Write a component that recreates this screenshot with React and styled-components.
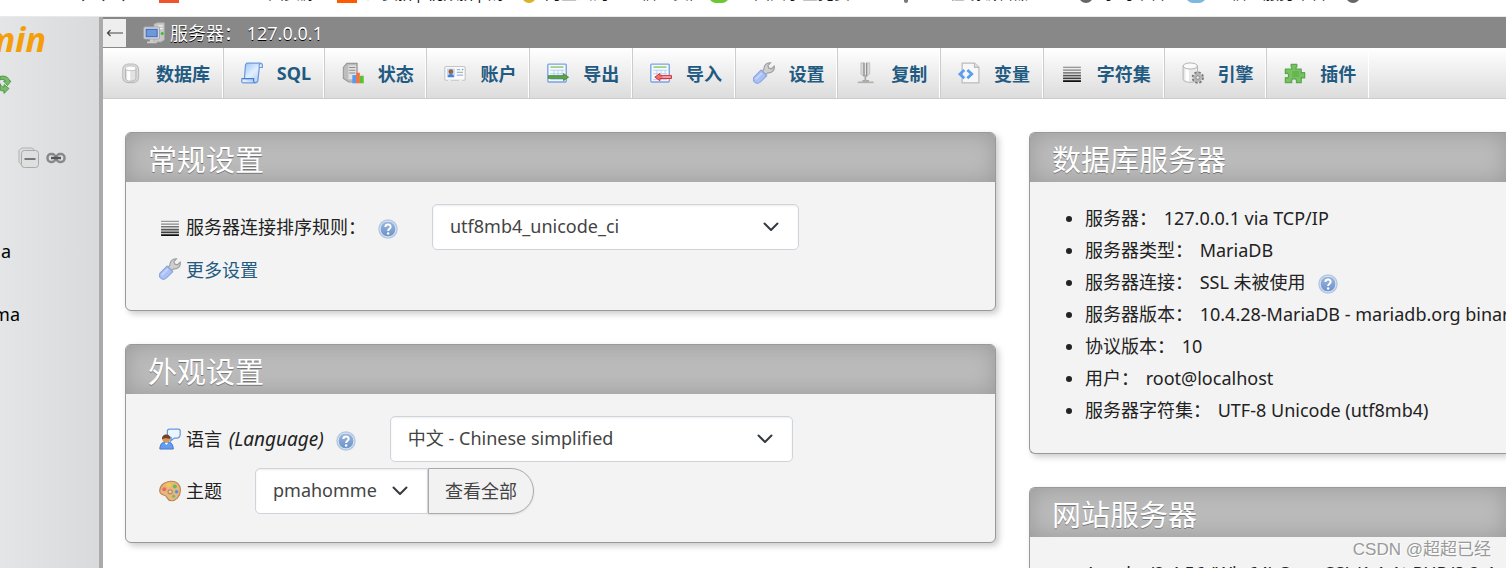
import styled, { createGlobalStyle } from "styled-components";

const GlobalStyle = createGlobalStyle`
  * {
    box-sizing: border-box;
  }
  body {
    margin: 0;
    overflow: hidden;
    background: #fff;
    color: #222;
    font-family: "Noto Sans", "Noto Sans CJK SC", sans-serif;
    font-size: 18px;
  }
  a {
    color: #235a81;
    text-decoration: none;
  }
`;

const Page = styled.div`
  display: flex;
  flex-direction: column;
  height: 100vh;
`;

const BookmarkBar = styled.div`
  flex: none;
  height: 17px;
  border-bottom: 1px solid #e9e9e9;
`;

const BookmarkRow = styled.div`
  display: flex;
  align-items: flex-end;
  height: 3px;
  padding-left: 80px;
  overflow: hidden;
`;

const Bookmark = styled.span`
  flex: none;
  width: ${({ $width }) => $width}px;
  font-size: 16px;
  line-height: 20px;
  color: #111;
  white-space: nowrap;
  overflow: hidden;
`;

const Favicon = styled.span`
  flex: none;
  width: ${({ $size }) => $size || 14}px;
  height: 14px;
  margin: 0 9px 0 16px;
  border-radius: ${({ $square }) => ($square ? "0" : "7px")};
  background: ${({ $color }) => $color};
`;

const Body = styled.div`
  flex: 1;
  display: flex;
  min-height: 0;
`;

const Sidebar = styled.aside`
  flex: none;
  width: 103px;
  border-right: 4px solid #aaa;
  background: linear-gradient(to right, #e3e5e6, #d9dadc);
  color: #000;
`;

const Logo = styled.div`
  display: flex;
  justify-content: flex-end;
  width: 46px;
  height: 46px;
  overflow: hidden;
  font-size: 34px;
  line-height: 44px;
  font-weight: 700;
  font-style: italic;
  color: #f49e0a;
`;

const SidebarTools = styled.div`
  display: flex;
  align-items: center;
  gap: 6px;
  height: ${({ $height }) => $height}px;
  padding-left: ${({ $left }) => $left || 0}px;
`;

const Tree = styled.div`
  padding-top: 11px;
`;

const TreeItem = styled.div`
  display: flex;
  justify-content: flex-end;
  align-items: center;
  width: ${({ $width }) => $width}px;
  height: 63px;
  overflow: hidden;
`;

const Main = styled.main`
  flex: 1;
  min-width: 0;
  overflow: hidden;
`;

const ServerBar = styled.div`
  display: flex;
  align-items: center;
  height: 31px;
  background: #888;
  color: #fff;
  text-shadow: 0 1px 0 #000;
  white-space: pre;
`;

const CollapseButton = styled.button`
  display: flex;
  align-items: center;
  justify-content: center;
  width: 23px;
  height: 28px;
  margin: 0 17px 0 0;
  padding: 0;
  border: 0;
  background: #eee;
`;

const ServerName = styled.span`
  margin-left: 5px;
  padding-bottom: 2px;
`;

const Nav = styled.nav`
  height: 51px;
  border-bottom: 1px solid #ccc;
  background: linear-gradient(#fff, #dcdcdc);
`;

const TabList = styled.ul`
  display: flex;
  height: 50px;
  margin: 0 137px 0 0;
  padding: 0;
  list-style: none;
`;

const Tab = styled.li`
  flex: 1 1 auto;
  border-left: 1px solid #ccc;
  border-right: 1px solid #fff;

  &:first-child {
    border-left: 0;
  }
`;

const TabLink = styled.a`
  display: flex;
  align-items: center;
  gap: 14px;
  height: 50px;
  padding: 0 11px 0 17px;
  font-weight: 700;
  white-space: nowrap;
`;

const TabName = styled.span`
  padding-bottom: 1px;
`;

const Columns = styled.div`
  display: grid;
  grid-template-columns: minmax(0, 42fr) minmax(0, 23fr);
  gap: 33px;
  padding: 33px 0 0 22px;
`;

const Column = styled.div`
  display: flex;
  flex-direction: column;
  gap: 33px;
`;

const Card = styled.section`
  border: 1px solid #999;
  border-right-width: ${({ $bleed }) => ($bleed ? "0" : "1px")};
  border-radius: ${({ $bleed }) => ($bleed ? "6px 0 0 6px" : "6px")};
  background: #f3f3f3;
  box-shadow: 3px 3px 6px #ccc;
  overflow: hidden;
`;

const CardTitle = styled.h2`
  height: 49px;
  margin: 0;
  padding-left: 22px;
  background: #bbb;
  box-shadow: inset 0 0 22px #999;
  color: #fff;
  font-size: 29px;
  line-height: 53px;
  font-weight: 400;
  text-shadow: 0 1px 0 #777;
`;

const CardBody = styled.div`
  display: flex;
  flex-direction: column;
  gap: 6px;
  padding: 22px 33px 28px;
`;

const Row = styled.div`
  display: flex;
  align-items: center;
  height: ${({ $short }) => ($short ? 26 : 46)}px;
  white-space: pre;
`;

const Label = styled.label`
  margin-left: 5px;
  padding-bottom: 2px;
`;

const ThemeLabel = styled(Label)`
  margin-right: 33px;
`;

const LanguageHint = styled.em`
  margin-left: 2px;
  font-size: 19px;
  line-height: 24px;
`;

const MoreLink = styled.a`
  display: flex;
  align-items: center;
  gap: 5px;
`;

const HelpLink = styled.a`
  display: flex;
  margin: 4px 34px 0 12px;
`;

const SelectBox = styled.div`
  display: grid;
  align-items: center;
  width: ${({ $width }) => $width}px;

  > * {
    grid-area: 1 / 1;
  }
  > svg {
    justify-self: end;
    margin-right: 20px;
    pointer-events: none;
  }
`;

const SelectInput = styled.select`
  width: 100%;
  height: 46px;
  padding: 0 17px 2px;
  appearance: none;
  border: 1px solid #ced4da;
  border-radius: ${({ $joined }) => ($joined ? "5px 0 0 5px" : "5px")};
  background: #fff;
  box-shadow: inset 0 1px 2px rgba(0, 0, 0, 0.075);
  color: #444;
  font: inherit;
`;

const ViewAllButton = styled.button`
  height: 46px;
  padding: 0 16px 2px;
  border: 1px solid #aaa;
  border-radius: 0 23px 23px 0;
  background: #f2f2f2;
  box-shadow: 0 1px 2px #ddd;
  color: #444;
  font: inherit;
`;

const InfoList = styled.ul`
  margin: 0;
  padding: 20px 0 27px 55px;
  line-height: 32px;
  white-space: pre;
`;

const InfoItem = styled.li`
  height: 32px;

  ${HelpLink} {
    display: inline-flex;
    vertical-align: middle;
    margin-top: 0;
  }
`;

const InfoValue = styled.span`
  margin-left: 2px;
`;

const Watermark = styled.div`
  position: absolute;
  right: 15px;
  bottom: 5px;
  color: #999;
  font-family: "Liberation Sans", "Noto Sans CJK SC", sans-serif;
  font-size: 17px;
  line-height: 26px;
  text-shadow: 1px 1px 0 #fff;
`;

function Icon({ size = 22, children }) {
  return (
    <svg width={size} height={size} viewBox="0 0 16 16" aria-hidden="true">
      {children}
    </svg>
  );
}

function DatabaseIcon() {
  return (
    <Icon>
      <rect x="2" y="1.5" width="11.5" height="13.5" rx="4" fill="#ddd" stroke="#bbb" strokeWidth=".8" />
      <path d="M4 4.5v7.6c0 2.4 7.6 2.4 7.6 0V4.5z" fill="#e2e2e2" stroke="#aaa" strokeWidth=".6" />
      <path d="M5.2 6v7c.8.4 1.4.5 2.2.5V6.5z" fill="#fff" />
      <ellipse cx="7.8" cy="4.6" rx="3.8" ry="1.7" fill="#fff" stroke="#bbb" strokeWidth=".6" />
    </Icon>
  );
}

function SqlIcon() {
  return (
    <Icon>
      <defs>
        <linearGradient id="scroll" x1="0" y1="0" x2="1" y2="1">
          <stop offset="0" stopColor="#8fbcf5" />
          <stop offset=".5" stopColor="#e2efff" />
          <stop offset="1" stopColor="#9fc4f5" />
        </linearGradient>
      </defs>
      <path
        d="M4.2.8h9.800c1.500 0 1.800 1.300 1.500 3.200h-2.200l-1 9.200c-.2 1.500-.8 2-2 2H1.600C.4 15.200.3 13.700.7 12h1.800L3.300 2z"
        fill="url(#scroll)"
        stroke="#6d9bdc"
        strokeWidth=".9"
      />
      <path d="M.8 12.100h8.400c-.4 1.500.1 2.800 1.200 3" fill="#b9d5fa" stroke="#4c7cc8" strokeWidth=".9" />
      <path d="M13.300 4c-.3-1.300 0-2.700.9-3" fill="none" stroke="#6d9bdc" strokeWidth=".8" />
    </Icon>
  );
}

function StatusIcon() {
  return (
    <Icon>
      <path d="M3.500 1h7.500v13.500H5L1 12V4z" fill="#bdbdbd" stroke="#999" strokeWidth=".8" />
      <path d="M4.700 2.500h5.500v10H4.700z" fill="#e2e2e2" />
      <path d="M5.200 4h4.500M5.200 6h4.500M5.200 8h4.500" stroke="#8c8c8c" strokeWidth=".9" />
      <path d="M7.500 9.500h2.800v6H7.500z" fill="#5a9bf0" />
      <path d="M10.300 7.800h2.700v7.700h-2.700z" fill="#f5713d" />
      <path d="M13 10h2.800v5.500H13z" fill="#59c234" />
    </Icon>
  );
}

function UsersIcon() {
  return (
    <Icon>
      <rect x=".6" y="3.300" width="14.800" height="10" rx="1" fill="#fafafa" stroke="#c4c4c4" strokeWidth=".8" />
      <rect x="2.200" y="4.800" width="5.600" height="6.200" fill="#b5d6fb" />
      <circle cx="5" cy="7" r="1.700" fill="#9b6235" />
      <path d="M2.700 11c0-3 4.600-3 4.600 0z" fill="#4480d6" />
      <path d="M9.300 5.500h2.500M9.300 7.500h4.500M9.300 9.500h4.500" stroke="#9fb7cf" strokeWidth=".9" />
      <path d="M13 5.500h1" stroke="#6699dd" strokeWidth="1" />
      <path d="M3 13.300h2M11 13.300h2" stroke="#eee" strokeWidth="1.200" />
    </Icon>
  );
}

function SheetBase() {
  return (
    <>
      <rect x=".6" y="1.500" width="13.400" height="13" rx=".6" fill="#f4f9ff" stroke="#7ba3e0" strokeWidth="1" />
      <path d="M2.500 3.700h9.500" stroke="#9bcf70" strokeWidth="1.200" />
      <path d="M2.300 6h10.200M2.300 8.500h10.200M2.300 12.800h10.200M5 6v7M8 6v7M11 6v7" stroke="#b6cff2" strokeWidth=".7" />
    </>
  );
}

function ExportIcon() {
  return (
    <Icon>
      <SheetBase />
      <path d="M1 9.900h11V8.400l3.700 2.600-3.700 2.600V12H1z" fill="#5aa548" stroke="#377d2b" strokeWidth=".5" />
    </Icon>
  );
}

function ImportIcon() {
  return (
    <Icon>
      <SheetBase />
      <path d="M15.700 9.900H7.200V8.400L3.500 11l3.700 2.600V12h8.500z" fill="#f07171" stroke="#e02d2d" strokeWidth=".7" />
      <path d="M9 10.900h6" stroke="#fbc9c9" strokeWidth=".7" />
    </Icon>
  );
}

function WrenchIcon() {
  return (
    <Icon>
      <path
        d="M8 5.200c-.2-2.800 2-4.900 4.700-4.600l-1.800 2 .6 1.900 2 .4 1.900-1.900c.6 2.800-1.700 5.200-4.600 4.900L9.300 9.100 6.700 6.700z"
        fill="#cfcfcf"
        stroke="#a0a0a0"
        strokeWidth=".9"
      />
      <path
        d="M5.900 5.900l4.100 4.100-5 4.800c-2.500 2-6-1-4.200-3.900z"
        fill="#a9c1f4"
        stroke="#8ba5e4"
        strokeWidth=".8"
      />
      <path d="M6.500 8l-4.500 4.500" stroke="#c9d8fb" strokeWidth="1.200" />
    </Icon>
  );
}

function ReplicationIcon() {
  return (
    <Icon>
      <path d="M4.300.6h2.500v10L4.300 8.800zM8.200.6h2.500v8.200l-2.500 1.800z" fill="#d9d9d9" stroke="#b5b5b5" strokeWidth=".5" />
      <path d="M6.500.8v9.500M8.500.8v9.500" stroke="#888" strokeWidth=".8" />
      <path d="M6.900 9.500h1.300V13h2v1.500H5.400V13h1.500z" fill="#aaa" />
      <path d="M2 14.800h11.500" stroke="#b2b2aa" strokeWidth="1.200" />
    </Icon>
  );
}

function VariablesIcon() {
  return (
    <Icon>
      <path d="M3 .8h9l3.200 3V15.200H3z" fill="#f7f7f7" stroke="#bbb" strokeWidth=".9" strokeLinejoin="round" />
      <path d="M12 .8v3.100h3.200" fill="#ddd" stroke="#bbb" strokeWidth=".8" />
      <path d="M4.600 5.800L1.400 8.800l3.200 3M6.800 5.800l3.200 3-3.200 3" fill="none" stroke="#5b9ef0" strokeWidth="2" />
    </Icon>
  );
}

function CharsetIcon() {
  return (
    <Icon>
      <path d="M1.500 3.900h13" stroke="#999" strokeWidth="1" />
      <path d="M1.500 5.900h13" stroke="#888" strokeWidth="1" />
      <path d="M1.500 7.900h13" stroke="#737373" strokeWidth="1.100" />
      <path d="M1.500 9.900h13" stroke="#555" strokeWidth="1.200" />
      <path d="M1.500 11.900h13" stroke="#3d3d3d" strokeWidth="1.200" />
      <path d="M1.500 13.900h13" stroke="#111" strokeWidth="1.300" />
    </Icon>
  );
}

function EnginesIcon() {
  return (
    <Icon>
      <path d="M.8 3v9.500c0 3 10.500 3 10.500 0V3z" fill="#e9e9e9" stroke="#b0b0b0" strokeWidth=".7" />
      <path d="M2.500 5v8.500l2.500.8V5.500z" fill="#fff" />
      <ellipse cx="6" cy="2.900" rx="5.200" ry="2.200" fill="#fafafa" stroke="#b0b0b0" strokeWidth=".7" />
      <circle cx="11.500" cy="11.300" r="3.700" fill="none" stroke="#777" strokeWidth="1.500" strokeDasharray="1.700 1.200" />
      <circle cx="11.500" cy="11.300" r="2.300" fill="none" stroke="#b5b5b5" strokeWidth="1.900" />
      <circle cx="11.500" cy="11.300" r="1.300" fill="#eee" stroke="#777" strokeWidth=".6" />
    </Icon>
  );
}

function PluginIcon() {
  return (
    <Icon>
      <path
        d="M1 5.200h4.700V3.900L5.200 3.400V1.800h4.100v1.600l-.6.500v1.300h3.800v3l.8-.5h1.700v3.900h-1.700l-.8-.5v3.900H9l.3-1.200-.8-1.500H6.200l-.8 1.500.3 1.200H1v-3.700l1.300.4 1-.8V9l-1-.9L1 8.500z"
        fill="#78c262"
        stroke="#5aa650"
        strokeWidth=".9"
        strokeLinejoin="round"
      />
      <path d="M6 6.500h5v4.500H6z" fill="#66b54e" />
    </Icon>
  );
}

function ServerIcon() {
  return (
    <Icon>
      <path d="M8 1.500L10.500.6h5V13l-2.500 1.500H8z" fill="#c8c8c8" stroke="#aaa" strokeWidth=".6" />
      <path d="M11 2.800h3.500M11 4.800h3.500" stroke="#eee" strokeWidth=".8" />
      <circle cx="14" cy="8.300" r="1.100" fill="#3dbb2f" />
      <rect x=".6" y="3.600" width="11.400" height="8.800" rx=".8" fill="#d4d8de" stroke="#a3a8b0" strokeWidth=".7" />
      <rect x="2.300" y="5.300" width="8" height="5.400" fill="#7098d8" stroke="#3467bd" strokeWidth=".7" />
      <path d="M5 12.500h2.800v1.700H10v1.200H3v-1.200h2z" fill="#ccc" />
    </Icon>
  );
}

function HelpIcon() {
  return (
    <Icon size={20}>
      <defs>
        <linearGradient id="help" x1="0" y1="0" x2="0" y2="1">
          <stop offset="0" stopColor="#9db7dd" />
          <stop offset="1" stopColor="#6a91c9" />
        </linearGradient>
      </defs>
      <circle cx="8" cy="8" r="7.800" fill="#b4c8e4" />
      <circle cx="8" cy="8" r="6.300" fill="url(#help)" stroke="#dbe6f4" strokeWidth=".8" />
      <path
        d="M5.900 6.400C6 3.700 10.200 3.800 10.100 6.300c0 1.500-2 1.500-2 3.200"
        fill="none"
        stroke="#fff"
        strokeWidth="1.600"
      />
      <circle cx="8.100" cy="11.600" r="1" fill="#fff" />
    </Icon>
  );
}

function LanguageIcon() {
  return (
    <Icon>
      <path d="M7.500.9h6.600c1 0 1.400.5 1.300 1.300v2.600c-.2 1.700-1.200 2.500-2.500 2.500h-1.800L8.500 9.500l.4-2.500C6.500 6.500 6 5.500 6.100 4V2.300C6.100 1.300 6.600.9 7.500.9z" fill="#eaf5ff" stroke="#6798de" strokeWidth=".9" />
      <path d="M.6 15.300C.6 12.500 2 10.700 3.300 10.400h4.400c1.500.4 2.700 2.200 2.700 4.900z" fill="#659cf0" stroke="#4277cc" strokeWidth=".7" />
      <circle cx="5.300" cy="7.900" r="2.800" fill="#d9985c" />
      <path d="M2.200 8.300C1.600 3.500 8.800 3.500 8.300 7.900 6 7.700 4.300 6.600 2.200 8.300z" fill="#704526" />
      <path d="M4.200 10.700l1.200 1.600 1.300-1.600z" fill="#fff" />
    </Icon>
  );
}

function PaletteIcon() {
  return (
    <Icon>
      <path
        d="M8.300.9c4.300-.4 7.400 2.300 7.300 6.400-.1 4.800-3.300 7.800-6.700 7.800-2.600 0-2.500-1.900-3.700-3.200C3.800 10.500.5 11.200.5 7.900.6 3.700 4.200 1.200 8.300.9z"
        fill="#e8b67f"
        stroke="#b98552"
        strokeWidth=".8"
      />
      <circle cx="3.800" cy="6.700" r="1.500" fill="#ef6a5a" />
      <circle cx="7.200" cy="3.600" r="1.500" fill="#f7cf3d" />
      <circle cx="11.500" cy="4.700" r="1.500" fill="#67bd52" />
      <circle cx="12.800" cy="8.600" r="1.300" fill="#5e8fe0" />
      <circle cx="8.100" cy="8.600" r="1.500" fill="#e3cdb4" stroke="#b98552" strokeWidth=".8" />
      <circle cx="10.600" cy="11.800" r="1.200" fill="#7dbb6a" />
    </Icon>
  );
}

function ReloadIcon() {
  return (
    <svg width="12" height="22" viewBox="0 0 12 22" aria-hidden="true">
      <path d="M0 2.500C5 1 9 3.500 9.600 7H11L7.500 11.500 3.500 7h2C4.500 5.300 2.500 5 0 5.800z" fill="#76bd68" stroke="#458c41" strokeWidth=".8" />
      <path d="M0 9.500c.5 2 2 3.500 4 3.500v-2.500l5 4-5 5V17c-2 0-3.500-.5-4-1z" fill="#76bd68" stroke="#458c41" strokeWidth=".8" />
    </svg>
  );
}

function CollapseIcon() {
  return (
    <svg width="22" height="22" viewBox="0 0 22 22" aria-hidden="true">
      <path d="M4 18H3.500L1 15V3.500L3.500 1H14l3 2.500" fill="#ddd" stroke="#b2b2b2" />
      <rect x="3.500" y="3.500" width="17" height="17" rx="3" fill="#dedfdf" stroke="#aaa" />
      <path d="M6.500 12h11" stroke="#777" strokeWidth="2" />
    </svg>
  );
}

function LinkIcon() {
  return (
    <svg width="20" height="12" viewBox="0 0 20 12" aria-hidden="true">
      <rect x="1.500" y="2" width="8" height="8" rx="3.500" fill="none" stroke="#888" strokeWidth="2.400" />
      <rect x="10.500" y="2" width="8" height="8" rx="3.500" fill="none" stroke="#888" strokeWidth="2.400" />
      <path d="M5 6h10" stroke="#555" strokeWidth="2.400" />
    </svg>
  );
}

function Chevron() {
  return (
    <svg width="16" height="16" viewBox="0 0 16 16" aria-hidden="true">
      <path d="M1.500 4.500l6.500 6.500 6.500-6.500" fill="none" stroke="#343a40" strokeWidth="2" strokeLinecap="round" strokeLinejoin="round" />
    </svg>
  );
}

function Select({ id, width, value, joined }) {
  return (
    <SelectBox $width={width}>
      <SelectInput id={id} $joined={joined}>
        <option>{value}</option>
      </SelectInput>
      <Chevron />
    </SelectBox>
  );
}

function Help() {
  return (
    <HelpLink href="#help" aria-label="help">
      <HelpIcon />
    </HelpLink>
  );
}

const tabs = [
  { name: "数据库", icon: DatabaseIcon },
  { name: "SQL", icon: SqlIcon },
  { name: "状态", icon: StatusIcon },
  { name: "账户", icon: UsersIcon },
  { name: "导出", icon: ExportIcon },
  { name: "导入", icon: ImportIcon },
  { name: "设置", icon: WrenchIcon },
  { name: "复制", icon: ReplicationIcon },
  { name: "变量", icon: VariablesIcon },
  { name: "字符集", icon: CharsetIcon },
  { name: "引擎", icon: EnginesIcon },
  { name: "插件", icon: PluginIcon },
];

const serverInfo = [
  { name: "服务器", value: "127.0.0.1 via TCP/IP" },
  { name: "服务器类型", value: "MariaDB" },
  { name: "服务器连接", value: "SSL 未被使用", help: true },
  { name: "服务器版本", value: "10.4.28-MariaDB - mariadb.org binary distribution" },
  { name: "协议版本", value: "10" },
  { name: "用户", value: "root@localhost" },
  { name: "服务器字符集", value: "UTF-8 Unicode (utf8mb4)" },
];

function App() {
  return (
    <>
      <GlobalStyle />
      <Page>
        <BookmarkBar>
          <BookmarkRow>
            <Bookmark $width={63}>， ， ，</Bookmark>
            <Favicon $color="#f0532d" $size={20} $square />
            <Bookmark $width={133}>　　　　地图资源</Bookmark>
            <Favicon $color="#ff5a00" $size={20} $square />
            <Bookmark $width={140}>免费拼| 视频拼| 购</Bookmark>
            <Favicon $color="#d9b32c" />
            <Bookmark $width={148}>阿里云的个人信息页面</Bookmark>
            <Favicon $color="#6cc832" $size={20} />
            <Bookmark $width={150}>全国大学生竞赛</Bookmark>
            <Favicon $color="#777" $size={4} />
            <Bookmark $width={146}>　　在线编辑器</Bookmark>
            <Favicon $color="#666" />
            <Bookmark $width={68}>学习平台</Bookmark>
            <Favicon $color="#7fb8df" $size={20} />
            <Bookmark $width={115}>　信息服务平台</Bookmark>
            <Favicon $color="#666" />
          </BookmarkRow>
        </BookmarkBar>
        <Body>
          <Sidebar>
            <Logo>min</Logo>
            <SidebarTools $height={44}>
              <ReloadIcon />
            </SidebarTools>
            <SidebarTools $height={101} $left={18}>
              <CollapseIcon />
              <LinkIcon />
            </SidebarTools>
            <Tree>
              <TreeItem $width={11}>a</TreeItem>
              <TreeItem $width={20}>ma</TreeItem>
            </Tree>
          </Sidebar>
          <Main>
            <ServerBar>
              <CollapseButton aria-label="collapse">
                <svg width="18" height="10" viewBox="0 0 18 10" aria-hidden="true">
                  <path d="M17 5H1.500M4.500 2L1.500 5l3 3" fill="none" stroke="#444" strokeWidth="1.200" />
                </svg>
              </CollapseButton>
              <ServerIcon />
              <ServerName>服务器： 127.0.0.1</ServerName>
            </ServerBar>
            <Nav>
              <TabList>
                {tabs.map(({ name, icon: TabIcon }) => (
                  <Tab key={name}>
                    <TabLink href={`#${name}`}>
                      <TabIcon />
                      <TabName>{name}</TabName>
                    </TabLink>
                  </Tab>
                ))}
              </TabList>
            </Nav>
            <Columns>
              <Column>
                <Card>
                  <CardTitle>常规设置</CardTitle>
                  <CardBody>
                    <Row>
                      <CharsetIcon />
                      <Label htmlFor="collation">服务器连接排序规则：</Label>
                      <Help />
                      <Select id="collation" width={367} value="utf8mb4_unicode_ci" />
                    </Row>
                    <Row $short>
                      <MoreLink href="#settings">
                        <WrenchIcon />
                        更多设置
                      </MoreLink>
                    </Row>
                  </CardBody>
                </Card>
                <Card>
                  <CardTitle>外观设置</CardTitle>
                  <CardBody>
                    <Row>
                      <LanguageIcon />
                      <Label htmlFor="language">
                        语言 <LanguageHint>(Language)</LanguageHint>
                      </Label>
                      <Help />
                      <Select id="language" width={403} value="中文 - Chinese simplified" />
                    </Row>
                    <Row>
                      <PaletteIcon />
                      <ThemeLabel htmlFor="theme">主题</ThemeLabel>
                      <Select id="theme" width={173} value="pmahomme" joined />
                      <ViewAllButton>查看全部</ViewAllButton>
                    </Row>
                  </CardBody>
                </Card>
              </Column>
              <Column>
                <Card $bleed>
                  <CardTitle>数据库服务器</CardTitle>
                  <InfoList>
                    {serverInfo.map(({ name, value, help }) => (
                      <InfoItem key={name}>
                        {name}： <InfoValue>{value}</InfoValue>
                        {help && <Help />}
                      </InfoItem>
                    ))}
                  </InfoList>
                </Card>
                <Card $bleed>
                  <CardTitle>网站服务器</CardTitle>
                  <InfoList>
                    <InfoItem>Apache/2.4.56 (Win64) OpenSSL/1.1.1t PHP/8.2.4</InfoItem>
                  </InfoList>
                </Card>
              </Column>
            </Columns>
          </Main>
        </Body>
      </Page>
      <Watermark>CSDN @超超已经</Watermark>
    </>
  );
}

export default App;
